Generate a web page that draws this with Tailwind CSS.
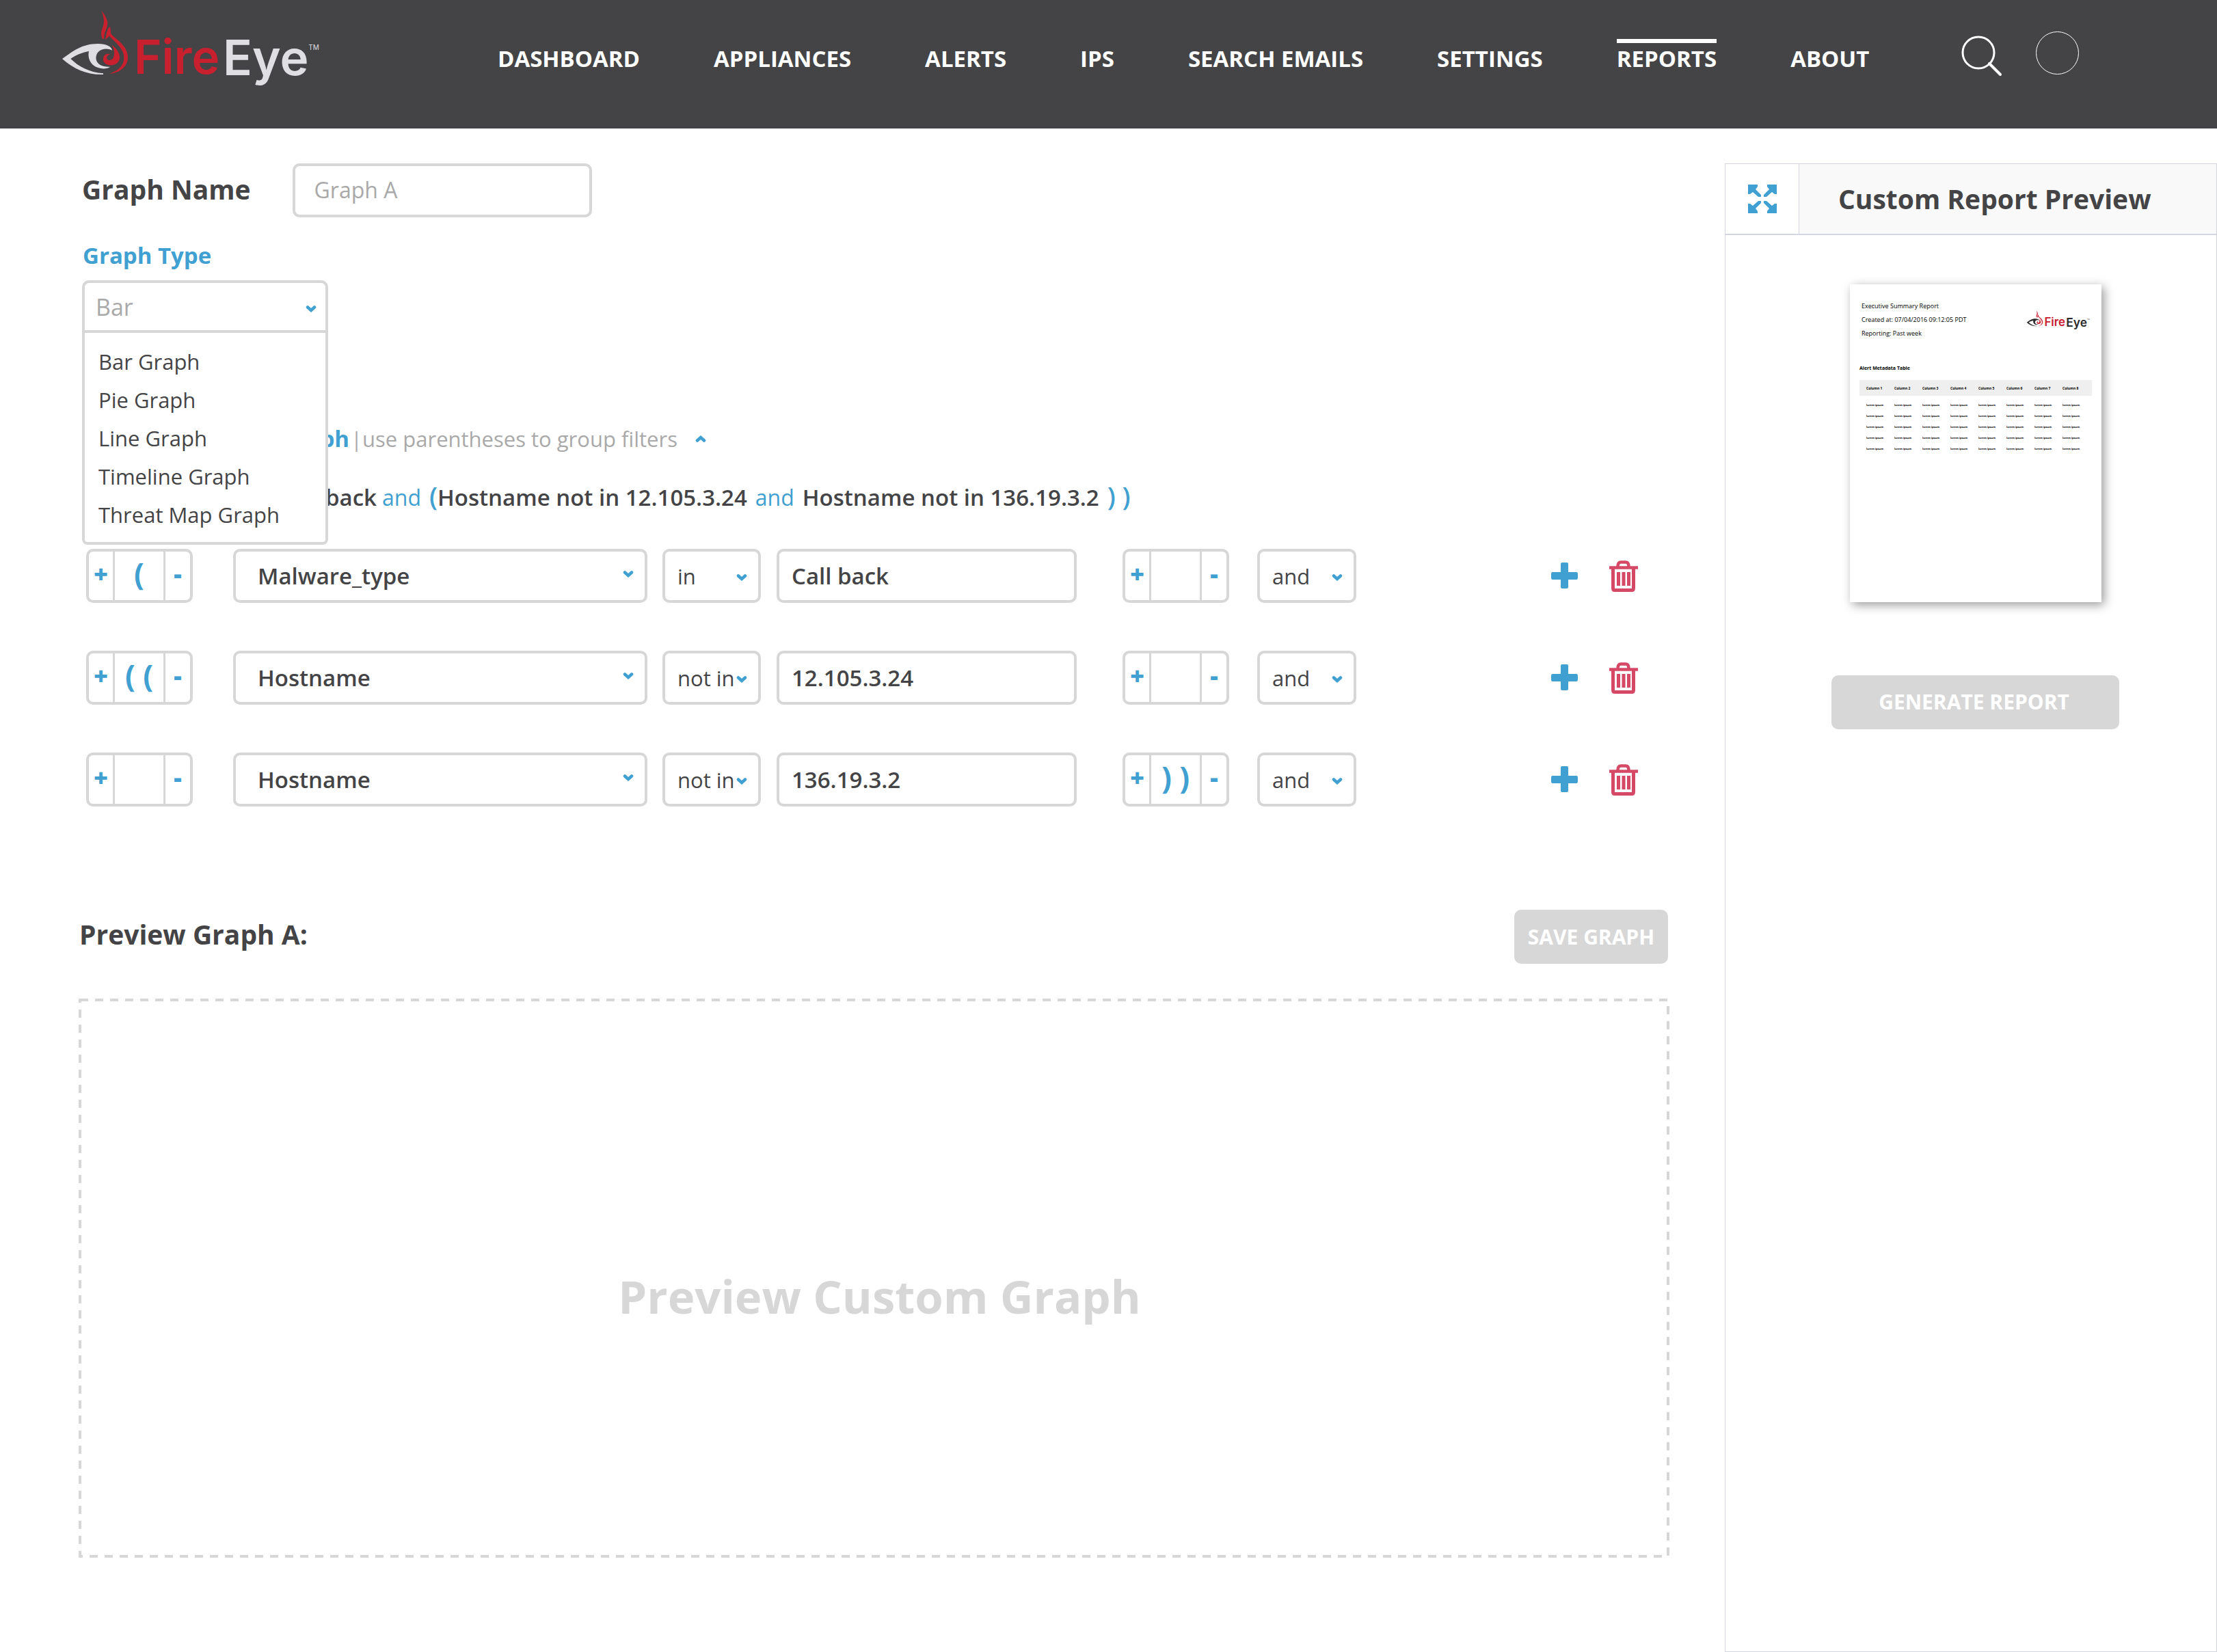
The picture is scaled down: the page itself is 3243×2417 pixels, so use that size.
<!DOCTYPE html>
<html lang="en">
<head>
<meta charset="utf-8">
<meta name="viewport" content="width=device-width, initial-scale=1">
<title>FireEye – Custom Report</title>
<script src="https://cdn.jsdelivr.net/npm/@tailwindcss/browser@4"></script>
</head>
<body class="flex min-h-screen flex-col bg-white font-['Open_Sans',sans-serif] text-[#444446]">

<!-- Shared icons -->
<svg class="hidden" aria-hidden="true">
  <symbol id="logo" viewBox="0 0 1200 390">
    <path fill="currentColor" d="M33 228C80 195 118 162 190 162C225 163 250 173 252 191C235 181 208 182 192 197C172 217 176 266 243 263C228 275 192 275 168 255C149 237 146 215 150 195C120 200 90 213 70 228C105 262 150 287 213 292V297C140 299 85 273 33 228Z"/>
    <g fill="#c8202f">
      <path d="M205 17C216 30 233 52 232 74C231 96 215 112 217 140H210C202 128 203 108 210 92C217 75 220 55 205 17Z"/>
      <path d="M241 87C249 96 243 108 248 119C264 140 321 168 321 222C321 265 280 291 240 294C275 281 304 262 304 222C304 182 264 155 240 128C232 134 231 140 222 141C228 125 226 102 241 87Z"/>
      <path d="M250 168C272 180 292 212 283 234C272 264 216 264 213 232C212 212 228 202 244 208C231 212 225 222 231 230C239 239 254 233 258 222C264 205 263 185 250 168Z"/>
      <text x="348" y="295" font-family="Inter, sans-serif" font-weight="600" font-size="207">Fire</text>
    </g>
    <text x="738" y="300" fill="currentColor" font-family="Inter, sans-serif" font-weight="600" font-size="213">Eye</text>
    <text x="1114" y="189" fill="currentColor" font-family="Inter, sans-serif" font-size="30">TM</text>
  </symbol>
  <symbol id="chevron" viewBox="0 0 16 10">
    <path d="M3 2.5L8 7L13 2.5" fill="none" stroke="currentColor" stroke-width="4.5" stroke-linecap="round"/>
  </symbol>
  <symbol id="plus" viewBox="0 0 39 39">
    <path fill="currentColor" d="M14 2Q14 0 16 0H23Q25 0 25 2V14H37Q39 14 39 17V22Q39 25 37 25H25V36Q25 38 23 38H16Q14 38 14 36V25H2Q0 25 0 22V17Q0 14 2 14H14Z"/>
  </symbol>
  <symbol id="trash" viewBox="0 0 42 46">
    <g fill="none" stroke="currentColor" stroke-width="5">
      <path d="M0 10.5H42" stroke-width="4.5"/>
      <path d="M12.5 9Q12.5 2.5 17 2.5H24Q28.5 2.5 28.5 9" stroke-width="4.5"/>
      <path d="M5.5 12V40.5Q5.5 43.5 8 43.5H33Q35.5 43.5 35.5 40.5V12"/>
      <path d="M13.5 17V37M21 17V37M28.5 17V37"/>
    </g>
  </symbol>
  <symbol id="expand" viewBox="0 0 42 42">
    <g fill="currentColor">
      <path id="arrow" d="M0 0H14V3L11 7L19 15V18H15L7 11L3 14H0Z"/>
      <use href="#arrow" transform="translate(42 0) scale(-1 1)"/>
      <use href="#arrow" transform="translate(0 42) scale(1 -1)"/>
      <use href="#arrow" transform="translate(42 42) scale(-1 -1)"/>
    </g>
  </symbol>
</svg>

<header class="flex h-[188px] shrink-0 items-start bg-[#444446] pl-20 text-white">
  <a href="#" aria-label="FireEye home" class="mt-[10px] shrink-0 text-[#dfdee3]">
    <svg class="h-[130px] w-[400px]"><use href="#logo"/></svg>
  </a>
  <nav class="mt-[57px] ml-[248px] flex gap-[108px] text-[33px] leading-[46px] font-bold whitespace-nowrap">
    <a href="#" class="border-t-6 border-transparent">DASHBOARD</a>
    <a href="#" class="border-t-6 border-transparent">APPLIANCES</a>
    <a href="#" class="border-t-6 border-transparent">ALERTS</a>
    <a href="#" class="border-t-6 border-transparent">IPS</a>
    <a href="#" class="border-t-6 border-transparent">SEARCH EMAILS</a>
    <a href="#" class="border-t-6 border-transparent">SETTINGS</a>
    <a href="#" class="border-t-6 border-white" aria-current="page">REPORTS</a>
    <a href="#" class="border-t-6 border-transparent">ABOUT</a>
  </nav>
  <button type="button" aria-label="Search" class="mt-[52px] ml-[135px]">
    <svg class="size-[60px]" viewBox="0 0 60 60" fill="none" stroke="#fff" stroke-linecap="round"><circle cx="25" cy="25" r="23" stroke-width="3"/><path d="M41 41L57 57" stroke-width="4"/></svg>
  </button>
  <button type="button" aria-label="Account" class="mt-[46px] ml-[49px] size-[63px] rounded-full border border-white"></button>
</header>

<div class="flex flex-1">
  <main class="flex flex-1 flex-col pt-[51px] pr-[81px] pb-[138px] pl-[115px]">

    <div class="ml-[5px] flex items-start gap-[61px]">
      <label for="name" class="text-[39px] leading-[76px] font-bold">Graph Name</label>
      <input id="name" type="text" placeholder="Graph A" class="h-[79px] w-[438px] rounded-[10px] border-4 border-[#d7d7d7] px-7 pb-[2px] text-[32px] placeholder:text-[#a9a9a9]">
    </div>

    <label for="type" class="mt-9 ml-[6px] text-[33px] leading-10 font-bold text-[#3fa0d1]">Graph Type</label>
    <div class="relative mt-4 ml-[5px] w-[360px]">
      <select id="type" class="h-[77px] w-full appearance-none rounded-t-[10px] border-4 border-[#d7d7d7] bg-white pt-[2px] pl-4 text-[34px] text-[#a9a9a9]"><option>Bar</option></select>
      <svg class="pointer-events-none absolute top-[37px] right-[17px] h-[10px] w-4 text-[#3fa0d1]"><use href="#chevron"/></svg>
      <ul class="absolute top-[73px] left-0 z-10 w-full rounded-b-[8px] border-4 border-[#d7d7d7] bg-white pt-[14px] pb-3 pl-5 text-[31px] leading-[56px] whitespace-nowrap">
        <li>Bar Graph</li>
        <li>Pie Graph</li>
        <li>Line Graph</li>
        <li>Timeline Graph</li>
        <li>Threat Map Graph</li>
      </ul>
    </div>

    <div class="mt-[135px] ml-[5px] flex items-center text-[31px] leading-10 whitespace-nowrap">
      <h2 class="w-[391px] text-right text-[33px] font-bold text-[#3fa0d1]">Filter Graph</h2>
      <p class="ml-[2px] text-[#a9a9a9]">|use parentheses to group filters</p>
      <button type="button" aria-label="Collapse filters" class="ml-[26px] text-[#3fa0d1]"><svg class="h-[10px] w-4 rotate-180"><use href="#chevron"/></svg></button>
    </div>

    <p class="mt-[43px] ml-[5px] flex h-10 items-baseline text-[33px] leading-10 font-semibold whitespace-nowrap">
      <span class="w-[431px] text-right">Call back</span>
      <span class="ml-2 text-[32px] font-normal text-[#3fa0d1]">and</span>
      <span class="ml-3 text-[38px] font-semibold text-[#3fa0d1]">(</span>
      <span>Hostname not in 12.105.3.24</span>
      <span class="ml-3 text-[32px] font-normal text-[#3fa0d1]">and</span>
      <span class="ml-3">Hostname not in 136.19.3.2</span>
      <span class="ml-3 text-[38px] font-semibold text-[#3fa0d1]">) )</span>
    </p>

    <div id="filters" class="mt-[58px] ml-[11px] flex flex-col gap-[70px]"></div>

    <div class="mt-[151px] flex items-start justify-between">
      <h2 class="pl-px text-[39px] leading-[72px] font-bold">Preview Graph A:</h2>
      <button type="button" class="mr-[2px] h-[79px] w-[225px] rounded-[10px] bg-[#d7d7d7] text-[30px] font-bold whitespace-nowrap text-white">SAVE GRAPH</button>
    </div>

    <section class="relative mt-[51px] flex min-h-[400px] flex-1 items-center justify-center pt-[52px] pl-4">
      <svg class="absolute inset-0 size-full overflow-visible" aria-hidden="true"><rect x="2" y="2" class="h-[calc(100%-4px)] w-[calc(100%-4px)]" fill="none" stroke="#d7d7d7" stroke-width="4" stroke-dasharray="12 10"/></svg>
      <p class="text-[67px] leading-[80px] font-bold text-[#d7d7d7]">Preview Custom Graph</p>
    </section>
  </main>

  <aside class="mt-[51px] flex w-[720px] shrink-0 flex-col border border-[#d3d5df]">
    <div class="flex h-[104px] border-b-2 border-[#d3d5df] bg-[#f9f9f9]">
      <button type="button" aria-label="Expand preview" class="flex w-[108px] items-center justify-center border-r border-[#d3d5df] bg-white text-[#3fa0d1]"><svg class="size-[42px]"><use href="#expand"/></svg></button>
      <h2 class="pl-[57px] text-[39px] leading-[102px] font-bold whitespace-nowrap">Custom Report Preview</h2>
    </div>

    <article class="mt-[72px] ml-[182px] h-[465px] w-[368px] bg-white px-[14px] shadow-[4px_4px_14px_rgba(0,0,0,0.4)]">
      <div class="flex justify-between pt-[22px]">
        <div class="pl-[3px] text-[9px] leading-5 font-medium whitespace-nowrap text-black">
          <p>Executive Summary Report</p>
          <p>Created at: 07/04/2016 09:12:05 PDT</p>
          <p>Reporting: Past week</p>
        </div>
        <svg class="mt-[15px] h-8 w-[98px] text-[#2b2b2d]" role="img" aria-label="FireEye"><use href="#logo"/></svg>
      </div>
      <table class="mt-[34px] w-full table-fixed text-left leading-4 whitespace-nowrap">
        <caption class="mb-[10px] text-left text-[7px] leading-[14px] font-bold text-black">Alert Metadata Table</caption>
        <thead class="bg-[#efefef] text-[5px] text-black"><tr id="columns" class="h-[23px]"></tr></thead>
        <tbody id="cells" class="text-[4px] font-bold text-black before:block before:h-[6px] before:content-['']"></tbody>
      </table>
    </article>

    <button type="button" class="mt-[107px] ml-[155px] h-[79px] w-[421px] rounded-[10px] bg-[#d7d7d7] pr-1 pb-[2px] text-[30px] font-bold text-white">GENERATE REPORT</button>
  </aside>
</div>

<script>
  const filters = [
    { open: '(', field: 'Malware_type', op: 'in', value: 'Call back', close: '' },
    { open: '( (', field: 'Hostname', op: 'not in', value: '12.105.3.24', close: '' },
    { open: '', field: 'Hostname', op: 'not in', value: '136.19.3.2', close: ') )' },
  ];
  const stepper = (text, side) => `
    <div class="flex h-[79px] w-[156px] shrink-0 rounded-[10px] border-4 border-[#d7d7d7] text-[36px] leading-[66px] font-extrabold text-[#3fa0d1]">
      <button type="button" class="flex w-[35px] justify-center" aria-label="Add ${side} parenthesis">+</button>
      <output class="flex flex-1 justify-center border-x-3 border-[#d7d7d7] text-[44px] leading-[64px] font-bold whitespace-nowrap">${text}</output>
      <button type="button" class="flex w-[36px] justify-center" aria-label="Remove ${side} parenthesis">-</button>
    </div>`;
  const fieldChevron = '<svg class="pointer-events-none absolute top-[32px] right-[20px] h-[10px] w-4 text-[#3fa0d1]"><use href="#chevron"/></svg>';
  const chevron = '<svg class="pointer-events-none absolute top-[37px] right-[20px] h-[10px] w-4 text-[#3fa0d1]"><use href="#chevron"/></svg>';
  document.getElementById('filters').innerHTML = filters.map(f => `
    <div class="flex items-center">
      ${stepper(f.open, 'opening')}
      <div class="relative ml-[59px] w-[606px]">
        <select aria-label="Field" class="block h-[79px] w-full appearance-none rounded-[10px] border-4 border-[#d7d7d7] bg-white pl-8 text-[33px] font-semibold"><option>${f.field}</option></select>${fieldChevron}
      </div>
      <div class="relative ml-[22px] w-[144px]">
        <select aria-label="Operator" class="block h-[79px] w-full appearance-none rounded-[10px] border-4 border-[#d7d7d7] bg-white pt-[2px] pl-[18px] text-[31px]"><option>${f.op}</option></select>${chevron}
      </div>
      <input aria-label="Value" type="text" value="${f.value}" class="ml-[23px] h-[79px] w-[439px] rounded-[10px] border-4 border-[#d7d7d7] px-[18px] text-[33px] font-semibold">
      <div class="ml-[67px]">${stepper(f.close, 'closing')}</div>
      <div class="relative ml-[41px] w-[145px]">
        <select aria-label="Join" class="block h-[79px] w-full appearance-none rounded-[10px] border-4 border-[#d7d7d7] bg-white pt-[2px] pl-[18px] text-[31px]"><option>and</option></select>${chevron}
      </div>
      <div class="mr-[46px] ml-auto flex items-center gap-[46px]">
        <button type="button" aria-label="Add filter" class="text-[#3fa0d1]"><svg class="size-[39px]"><use href="#plus"/></svg></button>
        <button type="button" aria-label="Delete filter" class="text-[#d54866]"><svg class="h-[46px] w-[42px]"><use href="#trash"/></svg></button>
      </div>
    </div>`).join('');

  const numbers = [1, 2, 3, 4, 5, 6, 7, 8];
  document.getElementById('columns').innerHTML = numbers.map(n => `<th class="w-[41px] pl-[10px] last:w-auto">Column ${n}</th>`).join('');
  document.getElementById('cells').innerHTML = ('<tr>' + numbers.map(() => '<td class="pl-[10px]">lorem ipsum</td>').join('') + '</tr>').repeat(5);
</script>
</body>
</html>
